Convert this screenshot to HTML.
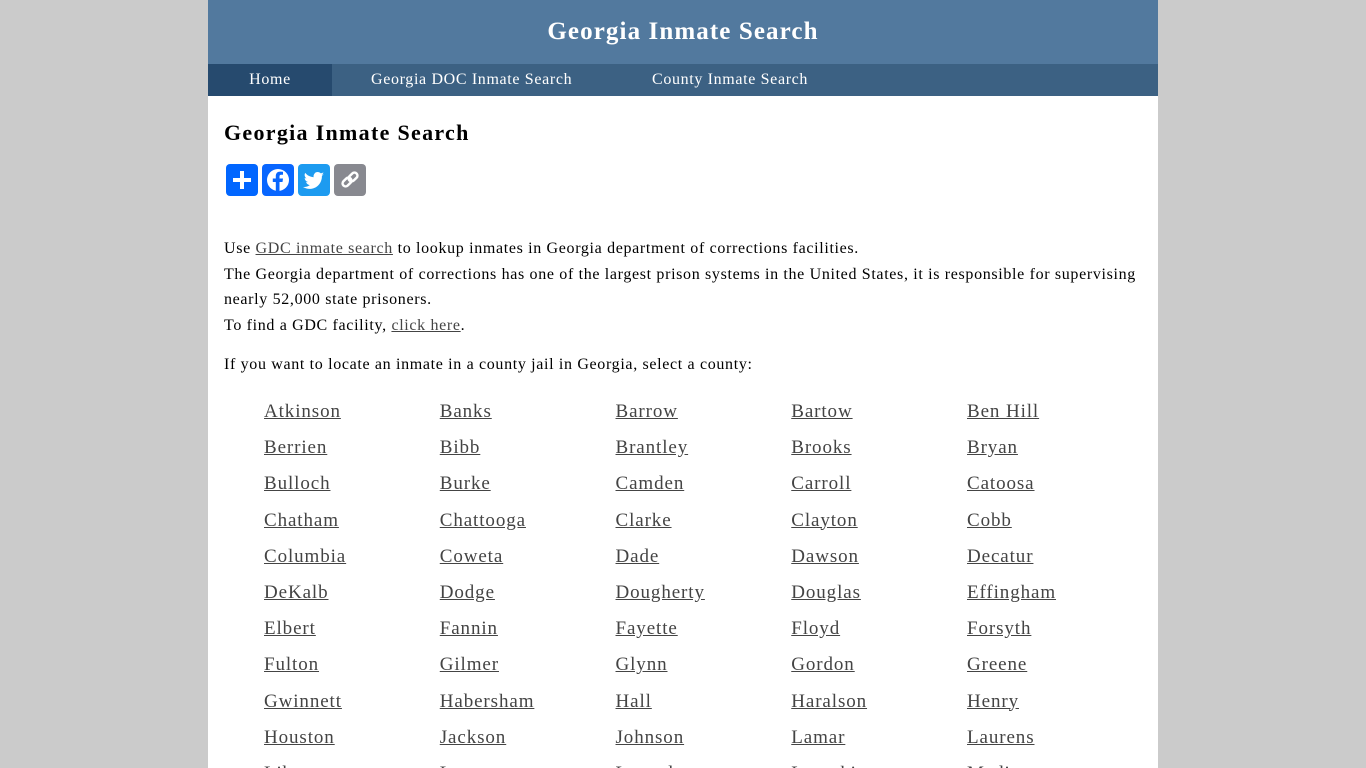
<!DOCTYPE html>
<html><head><meta charset="utf-8"><style>
body{margin:0;background:#cbcbcb;font-family:Georgia,"Liberation Serif",serif;}
.wrap{position:absolute;left:208px;top:0;width:950px;height:768px;background:#fff;overflow:hidden}
.hdr{height:64px;background:#52799e;color:#fff;text-align:center;font-weight:bold;font-size:25px;line-height:64px;letter-spacing:1.1px}
.nav{height:32px;background:#3c6183;position:relative;color:#fff;font-size:16px;letter-spacing:.65px}
.nav span{position:absolute;top:0;line-height:31px}
.home{left:0;width:124px;height:32px;background:#264a6e;text-align:center}
h1{position:absolute;left:16px;top:120px;margin:0;font-size:22px;font-weight:bold;letter-spacing:1.3px}
.ic{position:absolute;top:164px;width:32px;height:32px;border-radius:4px}
p{position:absolute;left:16px;margin:0;font-size:16px;line-height:25.7px;width:930px;letter-spacing:.66px}
a{color:#444;text-decoration:underline}
.g{position:absolute;left:56px;top:401px;font-size:19px;letter-spacing:.9px}
.g a{position:absolute;white-space:nowrap}
</style></head><body><div class="wrap">
<div class="hdr">Georgia Inmate Search</div>
<div class="nav"><span class="home">Home</span><span style="left:163px">Georgia DOC Inmate Search</span><span style="left:444px">County Inmate Search</span></div>
<h1>Georgia Inmate Search</h1>
<div class="ic" style="left:18px;background:#0166ff"><svg width="32" height="32"><path d="M16 7v18M7 16h18" stroke="#fff" stroke-width="4"/></svg></div>
<div class="ic" style="left:54px;background:#0866ff"><svg width="32" height="32"><circle cx="16" cy="16" r="11" fill="#fff"/><path d="M17.5 28V18h3l.5-3.5h-3.5v-2c0-1 .4-1.7 1.8-1.7H21V7.8c-.4 0-1.5-.2-2.8-.2-2.8 0-4.4 1.6-4.4 4.6v2.3h-3V18h3v10z" fill="#0866ff"/></svg></div>
<div class="ic" style="left:90px;background:#1d9bf0"><svg width="32" height="32"><path d="M26 10c-.8.4-1.6.6-2.4.7.9-.5 1.5-1.3 1.8-2.3-.8.5-1.7.8-2.6 1-1.6-1.7-4.4-1.8-6-.2-1 1-1.5 2.6-1.2 4-3.3-.2-6.3-1.7-8.400-4.300-1.100 1.900-.5 4.300 1.300 5.500-.6 0-1.300-.2-1.800-.5 0 2 1.400 3.700 3.300 4.100-.6.200-1.200.200-1.900.100.500 1.700 2.100 2.800 3.800 2.900-1.700 1.300-3.700 2-5.800 2H5c2 1.200 4.200 1.900 6.500 1.900 8 0 12.400-6.600 12.400-12.400v-.6c.8-.6 1.500-1.300 2.100-2.100z" fill="#fff"/></svg></div>
<div class="ic" style="left:126px;background:#888990"><svg width="32" height="32" fill="none" stroke="#fff" stroke-width="2.5"><rect x="8" y="15" width="10" height="6" rx="3" transform="rotate(-45 13 18)"/><rect x="14" y="10" width="10" height="6" rx="3" transform="rotate(-45 19 13)"/></svg></div>
<p style="top:236px">Use <a>GDC inmate search</a> to lookup inmates in Georgia department of corrections facilities.<br>The Georgia department of corrections has one of the largest prison systems in the United States, it is responsible for supervising nearly 52,000 state prisoners.<br>To find a GDC facility, <a>click here</a>.</p>
<p style="top:352px">If you want to locate an inmate in a county jail in Georgia, select a county:</p>
<div class="g" id="g"></div>
</div>
<script>
var c="Atkinson Banks Barrow Bartow Ben_Hill Berrien Bibb Brantley Brooks Bryan Bulloch Burke Camden Carroll Catoosa Chatham Chattooga Clarke Clayton Cobb Columbia Coweta Dade Dawson Decatur DeKalb Dodge Dougherty Douglas Effingham Elbert Fannin Fayette Floyd Forsyth Fulton Gilmer Glynn Gordon Greene Gwinnett Habersham Hall Haralson Henry Houston Jackson Johnson Lamar Laurens Liberty Lee Lowndes Lumpkin Madison".split(" ");
var h="";c.forEach(function(n,i){h+='<a style="left:'+(i%5*175.75)+'px;top:'+(Math.floor(i/5)*36.2)+'px">'+n.replace("_"," ")+'</a>';});
document.getElementById("g").innerHTML=h;
</script>
</body></html>
